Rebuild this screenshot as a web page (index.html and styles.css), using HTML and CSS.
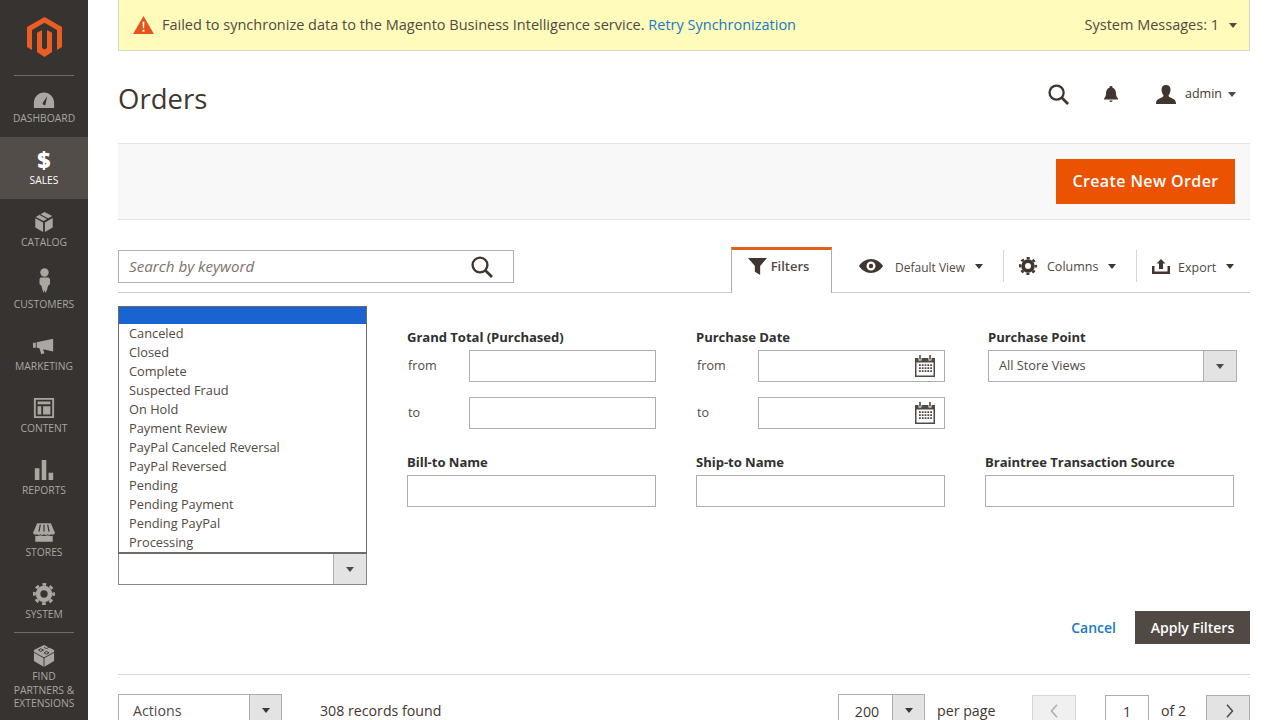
FILE: index.html
```html
<!DOCTYPE html>
<html lang="en">
<head>
<meta charset="utf-8">
<title>Orders</title>
<link rel="stylesheet" href="styles.css">
</head>
<body>
<svg class="defs" width="0" height="0">
  <symbol id="gear" viewBox="0 0 24 24">
    <circle cx="12" cy="12" r="10.500" fill="none" stroke="currentColor" stroke-width="3" stroke-dasharray="4.100 4.147" stroke-dashoffset="2.050"/>
    <circle cx="12" cy="12" r="6.500" fill="none" stroke="currentColor" stroke-width="5"/>
  </symbol>
  <symbol id="cal" viewBox="0 0 20 22">
    <path fill="#514943" d="M0 3h3.500v2.500h3V3h7v2.500h3V3H20v19H0z"/>
    <path fill="#514943" d="M4.200 0h1.600v4.500H4.200zM14.200 0h1.600v4.500h-1.600z"/>
    <rect x="1.500" y="7.500" width="17" height="13" fill="#fff"/>
    <path stroke="#514943" stroke-width="1.800" stroke-dasharray="1.800 1" d="M4 10.200h13M4 13.200h13M4 16.200h13"/>
  </symbol>
  <symbol id="search" viewBox="0 0 22 22">
    <circle cx="9" cy="9" r="7.400" fill="none" stroke="currentColor" stroke-width="2.400"/>
    <path d="M14.200 14.200L21 21" stroke="currentColor" stroke-width="2.800" fill="none"/>
  </symbol>
</svg>
<div class="app">
  <nav class="sidebar">
    <div class="logo-box">
      <svg class="logo" viewBox="0 0 35 40"><path fill="#eb5e23" d="M17.500 0L35 10v20l-5 3V13L17.500 5.800 5 13v20l-5-3V10z"/><path fill="#eb5e23" d="M10 15.800l5-2.900V31l2.500 1.500L20 31V12.900l5 2.900V35l-7.500 5L10 35z"/></svg>
    </div>
    <a class="nav-item first">
      <svg class="nav-icon" viewBox="0 0 24 24"><path fill="currentColor" fill-rule="evenodd" d="M1 23v-6C1 11 6 6 12 6s11 5 11 11v6zM15.500 10l-5 7.500a2 2 0 0 0 3 2z"/></svg>
      <span>DASHBOARD</span>
    </a>
    <a class="nav-item active">
      <span class="dollar">$</span>
      <span>SALES</span>
    </a>
    <a class="nav-item">
      <svg class="nav-icon" viewBox="0 0 24 24"><path fill="currentColor" d="M3 6.500L12.500 1 21 5.500 11.500 11zM2.500 8l8.500 4.500V23l-8.500-5zM21.500 7.500V18L13 23V12.500z"/><path stroke="#373330" stroke-width="1.200" d="M7.500 3.800l9 5" fill="none"/></svg>
      <span>CATALOG</span>
    </a>
    <a class="nav-item">
      <svg class="nav-icon tall" viewBox="0 0 11 25"><circle cx="5.500" cy="4.500" r="4.200" fill="currentColor"/><path fill="currentColor" d="M1.500 9.500h8l1.500 1.500v5l-2 2-1 4-1.500 3-1-3-1 3-1-3-1-4-2-2v-5z"/></svg>
      <span>CUSTOMERS</span>
    </a>
    <a class="nav-item">
      <svg class="nav-icon" viewBox="0 0 24 24"><path fill="currentColor" d="M0 8.500h3V14H0zM4 8l18-4v14l-11-2.500 1.500 4.500-3.500 1-2-6.500L4 14z"/></svg>
      <span>MARKETING</span>
    </a>
    <a class="nav-item">
      <svg class="nav-icon" viewBox="0 0 24 24"><path fill="currentColor" fill-rule="evenodd" d="M1 1h22v22H1zM3 3v18h18V3zM5 5h14v3H5zM5 10h4v9H5zM11 10h8v9h-8z"/></svg>
      <span>CONTENT</span>
    </a>
    <a class="nav-item">
      <svg class="nav-icon" viewBox="0 0 24 24"><path fill="currentColor" d="M2 10h5v13H2zM9.500 1h5v22h-5zM17 15h5v8h-5z"/></svg>
      <span>REPORTS</span>
    </a>
    <a class="nav-item">
      <svg class="nav-icon" viewBox="0 -1.500 24 24"><path fill="currentColor" d="M4.500 1h15L24 11.500a3 3 0 0 1-4 1.500 3 3 0 0 1-4 0 3.500 3.500 0 0 1-4 0 3.500 3.500 0 0 1-4 0 3 3 0 0 1-4 0A3 3 0 0 1 0 11.500zM2.500 14.500c2 .6 3.500.2 5.500-.5 2 1 6 1 8 0 2 .7 3.500 1.100 5.500.5V21h-19z"/><path stroke="#373330" stroke-width="1.300" d="M8 2.500L6.500 10M12 2.500V10M16 2.500l1.500 7.500" fill="none"/></svg>
      <span>STORES</span>
    </a>
    <a class="nav-item last">
      <svg class="nav-icon"><use href="#gear"/></svg>
      <span>SYSTEM</span>
    </a>
    <a class="nav-item partners">
      <svg class="nav-icon" viewBox="0 0 24 24"><path fill="currentColor" d="M12 0l11 5.500v12L12 24 1 17.500v-12z"/><path stroke="#373330" stroke-width="1" fill="none" d="M1 8l11 6 11-6M12 14v10M6 5.500l2.500 1.500 3-1.500-3-1.500zM12 2.500l2.500 1.500 3-1.500M12 8.500l2.500 1.500 3-1.500-3-1.500z"/></svg>
      <span>FIND<br>PARTNERS &amp;<br>EXTENSIONS</span>
    </a>
  </nav>
  <main class="main">
    <div class="message">
      <div class="message-left">
        <svg class="warn" viewBox="0 0 22 19"><path fill="#e8521b" d="M11 0l11 19H0z"/><path fill="#fff" d="M10 6h2l-.4 7h-1.200zM10 14.500h2v2h-2z"/></svg>
        <span class="message-text">Failed to synchronize data to the Magento Business Intelligence service. <a class="link">Retry Synchronization</a></span>
      </div>
      <div class="message-right"><span class="message-text">System Messages: 1</span><i class="caret"></i></div>
    </div>
    <header class="page-head">
      <h1>Orders</h1>
      <div class="head-actions">
        <svg class="head-search"><use href="#search"/></svg>
        <svg class="bell" viewBox="0 0 14 17"><path fill="#41362f" d="M7 0a1.500 1.500 0 0 1 1.500 1.800C11 2.500 12 5 12 7.500c0 2.500 1 4 2 5v1H0v-1c1-1 2-2.500 2-5C2 5 3 2.500 5.500 1.800A1.500 1.500 0 0 1 7 0zM5.500 14.500h3a1.500 1.500 0 0 1-3 0z"/></svg>
        <div class="user">
          <svg class="user-icon" viewBox="0 0 20 19"><path fill="#41362f" d="M10 0c3 0 4.500 2 4.500 4.500S13.500 9 12.500 10.500c0 1.500 2 2 4 3s3.500 2 3.500 5.500H0c0-3.500 1.500-4.500 3.500-5.500s4-1.500 4-3C6.500 9 5.500 7 5.500 4.500S7 0 10 0z"/></svg>
          <span class="user-name">admin</span><i class="caret"></i>
        </div>
      </div>
    </header>
    <div class="action-bar"><button class="primary">Create New Order</button></div>
    <div class="toolbar">
      <div class="search-box"><span class="placeholder">Search by keyword</span><svg class="search-icon"><use href="#search"/></svg></div>
      <div class="tools">
        <div class="tab">
          <svg class="funnel" viewBox="0 0 18 16"><path fill="#41362f" d="M0 0h18l-6.500 7.500V16l-5-3V7.500z"/></svg>
          <span>Filters</span>
        </div>
        <div class="tool tool-view">
          <svg class="eye" viewBox="0 0 24 14"><path fill="#41362f" fill-rule="evenodd" d="M12 0c5 0 9.500 3 12 7-2.500 4-7 7-12 7S2.500 11 0 7C2.500 3 7 0 12 0zm0 2.500a4.500 4.500 0 1 0 0 9 4.500 4.500 0 0 0 0-9z"/><circle cx="12" cy="7" r="2.200" fill="#41362f"/></svg>
          <span class="tool-text">Default View</span><i class="caret dark"></i>
        </div>
        <div class="tool tool-cols">
          <svg class="tool-gear"><use href="#gear"/></svg>
          <span>Columns</span><i class="caret dark"></i>
        </div>
        <div class="tool tool-export">
          <svg class="upload" viewBox="0 0 18 15"><path fill="#41362f" d="M9 0l4.500 4.500H11V10H7V4.500H4.500zM0 7h2.500v5.500h13V7H18v8H0z"/></svg>
          <span class="tool-text">Export</span><i class="caret dark"></i>
        </div>
      </div>
    </div>
    <section class="filters">
      <div class="status-col">
        <div class="listbox">
          <div class="opt selected"></div>
          <div class="opt">Canceled</div>
          <div class="opt">Closed</div>
          <div class="opt">Complete</div>
          <div class="opt">Suspected Fraud</div>
          <div class="opt">On Hold</div>
          <div class="opt">Payment Review</div>
          <div class="opt">PayPal Canceled Reversal</div>
          <div class="opt">PayPal Reversed</div>
          <div class="opt">Pending</div>
          <div class="opt">Pending Payment</div>
          <div class="opt">Pending PayPal</div>
          <div class="opt">Processing</div>
        </div>
        <div class="select"><span class="select-val"></span><span class="select-btn"><i class="caret"></i></span></div>
      </div>
      <div class="field">
        <div class="label">Grand Total (Purchased)</div>
        <div class="range"><span class="range-text">from</span><div class="input"></div></div>
        <div class="range"><span class="range-text">to</span><div class="input"></div></div>
      </div>
      <div class="field">
        <div class="label">Purchase Date</div>
        <div class="range"><span class="range-text">from</span><div class="input date"><svg class="cal"><use href="#cal"/></svg></div></div>
        <div class="range"><span class="range-text">to</span><div class="input date"><svg class="cal"><use href="#cal"/></svg></div></div>
      </div>
      <div class="field shifted">
        <div class="label">Purchase Point</div>
        <div class="select"><span class="select-val">All Store Views</span><span class="select-btn"><i class="caret"></i></span></div>
      </div>
      <div class="field second">
        <div class="label">Bill-to Name</div>
        <div class="input"></div>
      </div>
      <div class="field second">
        <div class="label">Ship-to Name</div>
        <div class="input"></div>
      </div>
      <div class="field second">
        <div class="label">Braintree Transaction Source</div>
        <div class="input"></div>
      </div>
    </section>
    <div class="filter-actions">
      <a class="cancel">Cancel</a>
      <button class="apply">Apply Filters</button>
    </div>
    <div class="grid-bar">
      <div class="actions-select"><span class="select-val">Actions</span><span class="select-btn"><i class="caret dark"></i></span></div>
      <div class="records">308 records found</div>
      <div class="pager">
        <div class="per-select"><span class="per-val">200</span><span class="select-btn"><i class="caret dark"></i></span></div>
        <span class="per-label">per page</span>
        <div class="nav-btn prev"><svg viewBox="0 0 8 14"><path d="M7 .8L1.500 7 7 13.200" fill="none" stroke="#adadad" stroke-width="1.500"/></svg></div>
        <div class="page-input">1</div>
        <span class="of">of 2</span>
        <div class="nav-btn next"><svg viewBox="0 0 8 14"><path d="M1 .8L6.500 7 1 13.200" fill="none" stroke="#514943" stroke-width="1.500"/></svg></div>
      </div>
    </div>
  </main>
</div>
</body>
</html>
```
FILE: styles.css
```css
* { box-sizing: border-box; }
html, body { margin: 0; height: 720px; overflow: hidden; background: #fff; }
body { font-family: "Open Sans", "Liberation Sans", sans-serif; font-size: 14px; color: #41362f; }
.defs { position: absolute; }
.app { display: flex; height: 720px; overflow: hidden; }

.sidebar { width: 88px; flex: none; background: #373330; display: flex; flex-direction: column; align-items: stretch; color: #aaa6a0; }
.logo-box { height: 75px; display: flex; justify-content: center; padding-top: 17px; }
.logo { width: 35px; height: 40px; }
.nav-item { height: 62px; display: flex; flex-direction: column; align-items: center; padding-top: 12px; font-size: 10.3px; line-height: 13.5px; text-align: center; position: relative; }
.nav-item.first::before, .nav-item.last::after { content: ""; position: absolute; left: 14px; right: 14px; height: 1px; background: #6f6a65; }
.nav-item.first::before { top: 0; }
.nav-item.last::after { bottom: 0; }
.nav-icon { width: 22px; height: 22px; margin-bottom: 3px; color: #aaa6a0; flex: none; }
.nav-icon.tall { width: 11px; height: 25px; margin-top: -5px; margin-bottom: 5px; }
.nav-item.active { background: #524d49; color: #fff; }
.dollar { font-size: 23px; line-height: 22px; height: 22px; margin-bottom: 3px; font-weight: 800; color: #fff; }
.partners { height: 87px; }

.main { flex: 1; padding: 0 30px; min-width: 0; }
.message { height: 51px; background: #fffbbb; border: 1px solid #d6d6c4; border-top: 0; display: flex; justify-content: space-between; align-items: center; padding: 0 12px 0 14px; color: #514943; }
.message-text { font-size: 14.5px; padding-bottom: 2px; }
.message-left { display: flex; align-items: center; gap: 8px; }
.warn { width: 21px; height: 18px; }
.link { color: #1979c3; }
.message-right { display: flex; align-items: center; gap: 10px; }
.caret { display: inline-block; width: 0; height: 0; border-left: 4.5px solid transparent; border-right: 4.5px solid transparent; border-top: 5px solid #514943; }
.caret.dark { border-top-color: #41362f; }

.page-head { height: 92px; display: flex; justify-content: space-between; align-items: flex-start; }
h1 { margin: 29px 0 0; font-size: 27.5px; line-height: 38px; font-weight: 400; color: #41362f; }
.head-actions { display: flex; align-items: center; margin-top: 33px; padding-right: 14px; }
.head-search { width: 21px; height: 21px; color: #41362f; }
.bell { width: 14px; height: 17px; margin-left: 35px; }
.user { display: flex; align-items: center; margin-left: 38px; }
.user-name { font-size: 12.5px; padding-bottom: 2px; }
.user-icon { width: 20px; height: 19px; margin-right: 9px; }
.user .caret { margin-left: 6px; }

.action-bar { height: 77px; background: #f8f8f8; border-top: 1px solid #e3e3e3; border-bottom: 1px solid #e3e3e3; display: flex; justify-content: flex-end; align-items: center; padding-right: 15px; }
.primary { width: 179px; height: 45px; padding: 0 0 2px; background: #eb5202; color: #fff; border: 0; font: 600 16px "Open Sans", sans-serif; letter-spacing: 0.4px; }

.toolbar { margin-top: 27px; height: 46px; border-bottom: 1px solid #ccc; display: flex; justify-content: space-between; align-items: flex-start; }
.search-box { margin-top: 3px; width: 396px; height: 33px; border: 1px solid #adadad; display: flex; justify-content: space-between; align-items: center; padding: 0 20px 0 10px; }
.placeholder { font-style: italic; font-size: 15.2px; color: #7c736b; padding-bottom: 2px; }
.search-icon { width: 22px; height: 22px; color: #41362f; }
.tools { display: flex; align-items: flex-start; height: 46px; }
.tab { width: 101px; height: 46px; border: 1px solid #adadad; border-bottom: 0; border-top: 3px solid #e0611b; background: #fff; display: flex; justify-content: center; align-items: center; gap: 4px; padding: 0 6px 11px 0; font-weight: 600; font-size: 13px; color: #514943; }
.funnel { width: 19px; height: 17px; flex: none; }
.tool { display: flex; align-items: center; height: 32px; margin-top: 3px; font-size: 12.5px; color: #514943; }
.tool-text { margin-top: 2px; }
.tool-view { width: 171px; padding-left: 27px; }
.tool-view .tool-text { font-size: 12px; }
.tool-cols { width: 133px; padding-left: 15px; border-left: 1px solid #d6d6d6; }
.tool-export { width: 114px; padding-left: 15px; border-left: 1px solid #d6d6d6; }
.eye { width: 24px; height: 14px; margin-right: 12px; }
.tool-gear { width: 18px; height: 18px; margin-right: 10px; color: #41362f; }
.upload { width: 18px; height: 15px; margin-right: 8px; }
.tool .caret { margin-left: 10px; }

.filters { margin-top: 13px; height: 279px; width: 1116px; display: grid; grid-template-columns: repeat(4, 249px); grid-template-rows: 148px 131px; column-gap: 40px; }
.status-col { grid-row: 1 / 3; }
.listbox { height: 248px; border: 1px solid #6f6a65; border-bottom-width: 2px; overflow: hidden; font-size: 12.8px; line-height: 19px; color: #514943; }
.opt { height: 19px; padding-left: 10px; }
.opt.selected { height: 17px; background: #1a64d1; }
.select { height: 32px; border: 1px solid #adadad; border-top: 0; display: flex; justify-content: space-between; }
.status-col .select { height: 31px; border-color: #8a8580; }
.select-val { padding-left: 10px; font-size: 12.75px; line-height: 28px; color: #514943; }
.select-btn { width: 33px; background: #e3e3e3; border-left: 1px solid #adadad; display: flex; justify-content: center; align-items: center; flex: none; }
.field { padding-top: 23px; }
.field.second { padding-top: 0; }
.label { font-weight: 700; font-size: 13.1px; line-height: 16px; height: 21px; color: #303030; letter-spacing: -0.05px; }
.range { display: flex; align-items: center; justify-content: space-between; height: 32px; margin-bottom: 15px; font-size: 12.6px; color: #514943; padding-left: 1px; }
.range-text { padding-bottom: 2px; }
.range .input { width: 187px; }
.input { height: 32px; border: 1px solid #adadad; background: #fff; }
.date { display: flex; justify-content: flex-end; align-items: center; padding-right: 9px; }
.cal { width: 20px; height: 22px; }
.shifted { margin: 0 -3px 0 3px; }
.shifted .select { border-top: 1px solid #adadad; }

.filter-actions { margin-top: 26px; height: 33px; display: flex; justify-content: flex-end; align-items: center; gap: 19px; }
.cancel { color: #1979c3; font-weight: 600; font-size: 14px; }
.apply { width: 115px; height: 33px; background: #514943; color: #fff; border: 0; font: 600 14px "Open Sans", sans-serif; }

.grid-bar { margin-top: 30px; border-top: 1px solid #d6d6d6; padding-top: 19px; display: flex; align-items: flex-start; }
.actions-select { width: 164px; height: 33px; border: 1px solid #adadad; display: flex; justify-content: space-between; }
.actions-select .select-val { padding-left: 14px; font-size: 14.2px; line-height: 32px; }
.actions-select .select-btn { width: 32px; }
.records { margin-left: 38px; line-height: 34px; font-size: 14.2px; }
.pager { margin-left: auto; display: flex; align-items: flex-start; line-height: 33px; font-size: 14.2px; }
.per-select { width: 87px; height: 33px; border: 1px solid #adadad; display: flex; }
.per-val { flex: 1; text-align: center; line-height: 18px; padding: 8px 0 0 3px; }
.per-select .select-btn { width: 32px; }
.per-label { margin-left: 12px; width: 95px; }
.nav-btn { width: 44px; height: 33px; margin-top: 1px; border: 1px solid #adadad; background: #e3e3e3; display: flex; justify-content: center; align-items: center; padding-bottom: 2px; }
.nav-btn svg { width: 8px; height: 14px; }
.nav-btn.prev { background: #f0f0f0; border-color: #d6d6d6; padding-right: 1px; }
.nav-btn.next { padding-left: 4px; }
.page-input { width: 44px; height: 33px; margin-top: 1px; margin-left: 29px; border: 1px solid #adadad; text-align: center; line-height: 18px; padding-top: 7px; }
.of { margin-left: 12px; width: 45px; }
```
